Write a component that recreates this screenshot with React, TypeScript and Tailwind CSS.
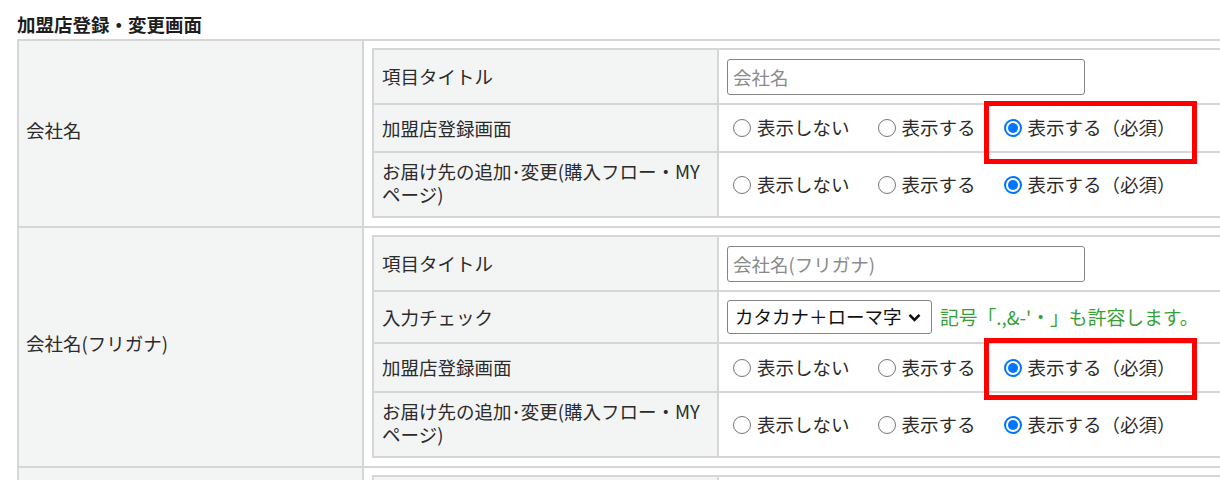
import type { ReactNode } from "react";

const line = "border-[#d6d6d6]";

function Radio({
  label,
  checked,
  box,
}: {
  label: string;
  checked?: boolean;
  box?: string;
}) {
  return (
    <label className="relative flex h-[24px] items-center gap-[6px]">
      {checked ? (
        <span className="flex h-[18px] w-[18px] shrink-0 items-center justify-center rounded-full border-2 border-[#0075ff] bg-white">
          <span className="h-[10px] w-[10px] rounded-full bg-[#0075ff]" />
        </span>
      ) : (
        <span className="h-[18px] w-[18px] shrink-0 rounded-full border border-[#767676] bg-white" />
      )}
      <span className="whitespace-nowrap">{label}</span>
      {box && (
        <span
          className={`pointer-events-none absolute border-[5px] border-[#ff0000] ${box}`}
        />
      )}
    </label>
  );
}

function DisplayRadios({ box }: { box?: string }) {
  return (
    <div className="flex items-center gap-[28px] pl-[6px]">
      <Radio label="表示しない" />
      <Radio label="表示する" />
      <Radio label="表示する（必須）" checked box={box} />
    </div>
  );
}

function TitleInput({ placeholder }: { placeholder: string }) {
  return (
    <input
      type="text"
      placeholder={placeholder}
      className="h-[36px] w-[358px] rounded-[3px] border border-[#858585] px-[5px] text-[18.5px] placeholder:text-[#8a8a8a]"
    />
  );
}

function Row({
  label,
  height,
  children,
}: {
  label: ReactNode;
  height: string;
  children: ReactNode;
}) {
  return (
    <div className={`flex border-b-2 ${line} ${height}`}>
      <div
        className={`flex w-[345px] shrink-0 items-center border-r-2 ${line} bg-[#f3f4f4] px-[8px] leading-[23px]`}
      >
        {label}
      </div>
      <div className="flex flex-1 items-center bg-white px-[8px]">
        {children}
      </div>
    </div>
  );
}

function Section({ label, children }: { label: string; children: ReactNode }) {
  return (
    <div className={`flex border-b-2 ${line}`}>
      <div
        className={`flex w-[345px] shrink-0 items-center border-r-2 ${line} bg-[#f3f4f4] px-[7px] pb-[6px]`}
      >
        {label}
      </div>
      <div className="flex-1 pb-[8px] pl-[8px] pt-[7px]">
        <div className={`border-l-2 border-t-2 ${line}`}>{children}</div>
      </div>
    </div>
  );
}

const deliveryLabel = (
  <span className="-mt-[3px]">
    お届け先の追加･変更(購入フロー・MY
    <br />
    ページ)
  </span>
);

export default function App() {
  return (
    <div className="h-[480px] w-[1220px] overflow-hidden bg-white font-['Noto_Sans_CJK_JP','Noto_Sans',sans-serif] text-[18.5px] text-[#2b2b2b]">
      <h1 className="h-[39px] pl-[17px] pt-[12px] text-[18.5px] font-bold leading-[24px] text-[#1e1e1e]">
        加盟店登録・変更画面
      </h1>
      <div className={`ml-[17px] w-[1250px] border-l-2 border-t-2 ${line}`}>
        <Section label="会社名">
          <Row label="項目タイトル" height="h-[55px]">
            <TitleInput placeholder="会社名" />
          </Row>
          <Row label="加盟店登録画面" height="h-[48px]">
            <DisplayRadios box="-left-[20px] -top-[15px] h-[63px] w-[213px]" />
          </Row>
          <Row label={deliveryLabel} height="h-[65px]">
            <DisplayRadios />
          </Row>
        </Section>

        <Section label="会社名(フリガナ)">
          <Row label="項目タイトル" height="h-[55px]">
            <TitleInput placeholder="会社名(フリガナ)" />
          </Row>
          <Row label="入力チェック" height="h-[52px]">
            <div className="flex h-[34px] w-[205px] items-center justify-between rounded-[3px] border border-[#858585] pl-[7px] pr-[10px] text-[#111]">
              <span className="whitespace-nowrap">カタカナ＋ローマ字</span>
              <svg width="13" height="9" viewBox="0 0 13 9" fill="none">
                <path
                  d="M1.5 1.8 L6.5 6.8 L11.5 1.8"
                  stroke="#111"
                  strokeWidth="2.6"
                />
              </svg>
            </div>
            <span className="ml-[8px] whitespace-nowrap text-[18.8px] text-[#35a035]">
              記号「.,&amp;-'・」も許容します。
            </span>
          </Row>
          <Row label="加盟店登録画面" height="h-[49px]">
            <DisplayRadios box="-left-[20px] -top-[18px] h-[62px] w-[213px]" />
          </Row>
          <Row label={deliveryLabel} height="h-[65px]">
            <DisplayRadios />
          </Row>
        </Section>

        <Section label="部署名">
          <Row label="項目タイトル" height="h-[55px]">
            <TitleInput placeholder="部署名" />
          </Row>
        </Section>
      </div>
    </div>
  );
}
